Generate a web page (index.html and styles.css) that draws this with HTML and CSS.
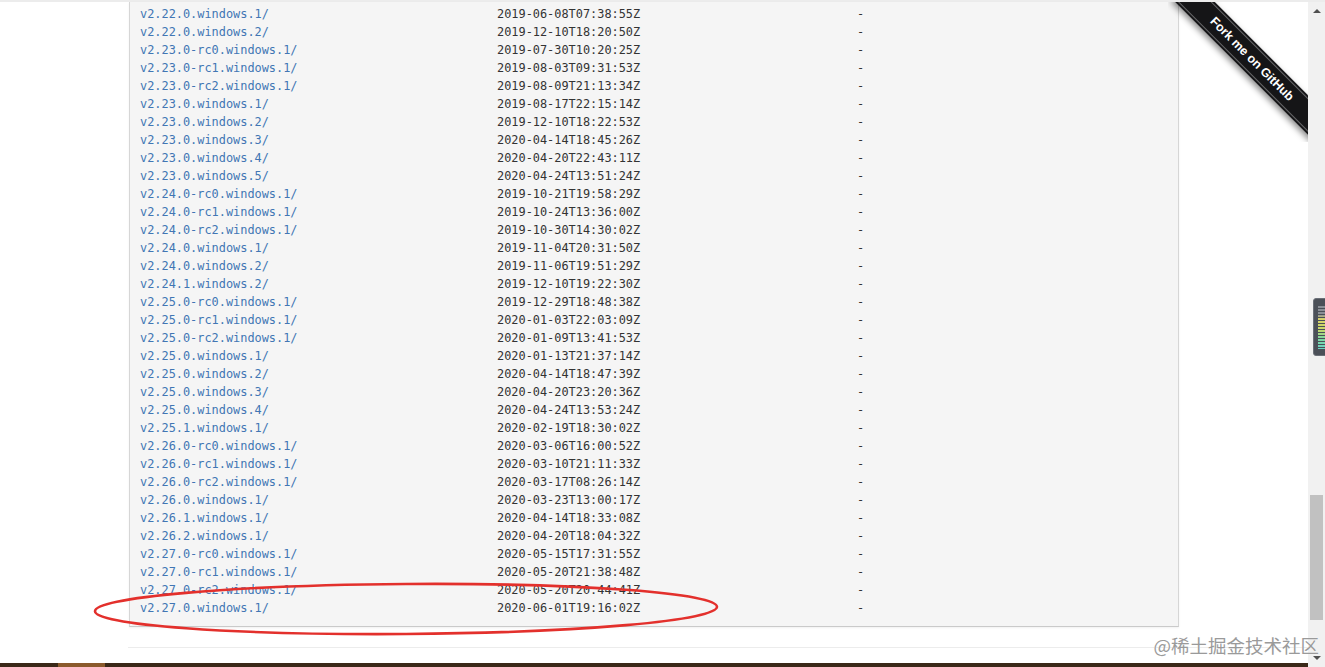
FILE: index.html
```html
<!DOCTYPE html>
<html lang="en">
<head>
    <meta charset="UTF-8">
    <title>Index of /git-for-windows/</title>
    <link rel="stylesheet" href="styles.css">
</head>
<body>
    <div class="main">
        <div class="topline"></div>
        <div class="listing">
            <div class="row"><a href="#">v2.22.0.windows.1/</a><span>2019-06-08T07:38:55Z</span><span>-</span></div>
            <div class="row"><a href="#">v2.22.0.windows.2/</a><span>2019-12-10T18:20:50Z</span><span>-</span></div>
            <div class="row"><a href="#">v2.23.0-rc0.windows.1/</a><span>2019-07-30T10:20:25Z</span><span>-</span></div>
            <div class="row"><a href="#">v2.23.0-rc1.windows.1/</a><span>2019-08-03T09:31:53Z</span><span>-</span></div>
            <div class="row"><a href="#">v2.23.0-rc2.windows.1/</a><span>2019-08-09T21:13:34Z</span><span>-</span></div>
            <div class="row"><a href="#">v2.23.0.windows.1/</a><span>2019-08-17T22:15:14Z</span><span>-</span></div>
            <div class="row"><a href="#">v2.23.0.windows.2/</a><span>2019-12-10T18:22:53Z</span><span>-</span></div>
            <div class="row"><a href="#">v2.23.0.windows.3/</a><span>2020-04-14T18:45:26Z</span><span>-</span></div>
            <div class="row"><a href="#">v2.23.0.windows.4/</a><span>2020-04-20T22:43:11Z</span><span>-</span></div>
            <div class="row"><a href="#">v2.23.0.windows.5/</a><span>2020-04-24T13:51:24Z</span><span>-</span></div>
            <div class="row"><a href="#">v2.24.0-rc0.windows.1/</a><span>2019-10-21T19:58:29Z</span><span>-</span></div>
            <div class="row"><a href="#">v2.24.0-rc1.windows.1/</a><span>2019-10-24T13:36:00Z</span><span>-</span></div>
            <div class="row"><a href="#">v2.24.0-rc2.windows.1/</a><span>2019-10-30T14:30:02Z</span><span>-</span></div>
            <div class="row"><a href="#">v2.24.0.windows.1/</a><span>2019-11-04T20:31:50Z</span><span>-</span></div>
            <div class="row"><a href="#">v2.24.0.windows.2/</a><span>2019-11-06T19:51:29Z</span><span>-</span></div>
            <div class="row"><a href="#">v2.24.1.windows.2/</a><span>2019-12-10T19:22:30Z</span><span>-</span></div>
            <div class="row"><a href="#">v2.25.0-rc0.windows.1/</a><span>2019-12-29T18:48:38Z</span><span>-</span></div>
            <div class="row"><a href="#">v2.25.0-rc1.windows.1/</a><span>2020-01-03T22:03:09Z</span><span>-</span></div>
            <div class="row"><a href="#">v2.25.0-rc2.windows.1/</a><span>2020-01-09T13:41:53Z</span><span>-</span></div>
            <div class="row"><a href="#">v2.25.0.windows.1/</a><span>2020-01-13T21:37:14Z</span><span>-</span></div>
            <div class="row"><a href="#">v2.25.0.windows.2/</a><span>2020-04-14T18:47:39Z</span><span>-</span></div>
            <div class="row"><a href="#">v2.25.0.windows.3/</a><span>2020-04-20T23:20:36Z</span><span>-</span></div>
            <div class="row"><a href="#">v2.25.0.windows.4/</a><span>2020-04-24T13:53:24Z</span><span>-</span></div>
            <div class="row"><a href="#">v2.25.1.windows.1/</a><span>2020-02-19T18:30:02Z</span><span>-</span></div>
            <div class="row"><a href="#">v2.26.0-rc0.windows.1/</a><span>2020-03-06T16:00:52Z</span><span>-</span></div>
            <div class="row"><a href="#">v2.26.0-rc1.windows.1/</a><span>2020-03-10T21:11:33Z</span><span>-</span></div>
            <div class="row"><a href="#">v2.26.0-rc2.windows.1/</a><span>2020-03-17T08:26:14Z</span><span>-</span></div>
            <div class="row"><a href="#">v2.26.0.windows.1/</a><span>2020-03-23T13:00:17Z</span><span>-</span></div>
            <div class="row"><a href="#">v2.26.1.windows.1/</a><span>2020-04-14T18:33:08Z</span><span>-</span></div>
            <div class="row"><a href="#">v2.26.2.windows.1/</a><span>2020-04-20T18:04:32Z</span><span>-</span></div>
            <div class="row"><a href="#">v2.27.0-rc0.windows.1/</a><span>2020-05-15T17:31:55Z</span><span>-</span></div>
            <div class="row"><a href="#">v2.27.0-rc1.windows.1/</a><span>2020-05-20T21:38:48Z</span><span>-</span></div>
            <div class="row"><a href="#">v2.27.0-rc2.windows.1/</a><span>2020-05-20T20:44:41Z</span><span>-</span></div>
            <div class="row"><a href="#">v2.27.0.windows.1/</a><span>2020-06-01T19:16:02Z</span><span>-</span></div>
        </div>
        <div class="rule"></div>
        <div class="spacer"></div>
        <div class="taskbar"><span class="task-active"></span></div>

        <!-- ribbon over the top right corner -->
        <div class="fork">
            <a href="#">Fork me on GitHub</a>
        </div>

        <!-- red mark drawn over the last row -->
        <svg class="circle" width="632" height="58" viewBox="0 0 632 58">
            <ellipse cx="314" cy="27" rx="311" ry="25" fill="none" stroke="#e3302c" stroke-width="2.6" transform="rotate(-0.4 314 27)"/>
        </svg>
    </div>

    <div class="scrollbar">
        <span class="arrow up"></span>
        <div class="track"><div class="thumb"></div></div>
        <span class="arrow down"></span>
    </div>

    <div class="meter"><div class="meter-bars"></div></div>
    <div class="watermark">@稀土掘金技术社区</div>
</body>
</html>
```

FILE: styles.css
```css
html, body {
    margin: 0;
    padding: 0;
    height: 667px;
    overflow: hidden;
}
body {
    display: flex;
    background-color: #fff;
    font-family: "DejaVu Sans Mono", "Liberation Mono", monospace;
    color: #333;
    position: relative;
}
.main {
    flex: 1;
    display: flex;
    flex-direction: column;
    position: relative;
    overflow: hidden;
}
.topline {
    height: 2px;
    background-color: #ececec;
}
.listing {
    margin-left: 129px;
    width: 1038px;
    padding: 3px 0 9px 10px;
    background-color: #f5f5f5;
    border: 1px solid #d6d6d6;
    border-top: none;
    border-bottom-color: #cacaca;
    box-shadow: 0 1px 2px rgba(0, 0, 0, 0.06);
}
.row {
    display: grid;
    grid-template-columns: 357px 360px 1fr;
    height: 18px;
    line-height: 18px;
    font-size: 11.9px;
    white-space: nowrap;
}
.row a {
    color: #4176b4;
    text-decoration: none;
}
.row span {
    color: #333;
}
.rule {
    margin: 20px 0 0 128px;
    border-top: 1px solid #ececec;
}
.spacer {
    flex: 1;
}
.taskbar {
    height: 4px;
    background-color: #3a2818;
    display: flex;
}
.task-active {
    margin-left: 58px;
    width: 47px;
    background-color: #8a5a2c;
}

/* fork ribbon */
.fork {
    position: absolute;
    top: 2px;
    right: 0;
    width: 140px;
    height: 140px;
    overflow: hidden;
}
.fork a {
    position: absolute;
    left: -16px;
    top: 43px;
    width: 200px;
    height: 28px;
    line-height: 28px;
    box-sizing: border-box;
    transform: rotate(45deg);
    background-color: #151517;
    color: #fff;
    text-align: center;
    text-decoration: none;
    font-family: "Liberation Sans", Arial, sans-serif;
    font-weight: bold;
    font-size: 12.5px;
    box-shadow: 2px 3px 6px rgba(0, 0, 0, 0.45);
}
.fork a::before, .fork a::after {
    content: "";
    position: absolute;
    left: 0;
    width: 100%;
    height: 1px;
    background-color: rgba(255, 255, 255, 0.35);
}
.fork a::before {
    top: 2px;
}
.fork a::after {
    bottom: 2px;
}

.circle {
    position: absolute;
    left: 92px;
    top: 582px;
}
.watermark {
    position: absolute;
    right: 6px;
    top: 632px;
    font-family: "Noto Sans CJK SC", sans-serif;
    font-size: 18.5px;
    line-height: 26px;
    color: #9a9a9a;
    text-shadow: 0 0 1px #fff;
    white-space: nowrap;
}

/* fake scrollbar */
.scrollbar {
    width: 17px;
    display: flex;
    flex-direction: column;
    align-items: center;
    background-color: #f1f1f1;
    border-top: 2px solid #ececec;
}
.arrow {
    width: 0;
    height: 0;
    border-left: 4px solid transparent;
    border-right: 4px solid transparent;
    margin: 7px 0;
}
.arrow.up {
    border-bottom: 4px solid #505050;
}
.arrow.down {
    border-top: 4px solid #505050;
}
.track {
    flex: 1;
    width: 100%;
    display: flex;
    flex-direction: column;
    justify-content: flex-end;
}
.thumb {
    height: 125px;
    margin: 0 2px 29px;
    background-color: #c1c1c1;
}

/* extension widget at the right edge */
.meter {
    position: absolute;
    left: 1313px;
    top: 298px;
    width: 16px;
    height: 58px;
    box-sizing: border-box;
    padding: 7px 0 6px 4px;
    background-color: #4b5058;
    border-radius: 3px;
    border: 1px solid #6b7078;
}
.meter-bars {
    width: 7px;
    height: 100%;
    background:
        repeating-linear-gradient(to bottom, transparent 0, transparent 2px, #4b5058 2px, #4b5058 3px),
        linear-gradient(to bottom, #8a8f96 0%, #8a8f96 20%, #d9d36a 30%, #c7d86a 55%, #7fd7a0 75%, #6ad3c4 100%);
}
```
